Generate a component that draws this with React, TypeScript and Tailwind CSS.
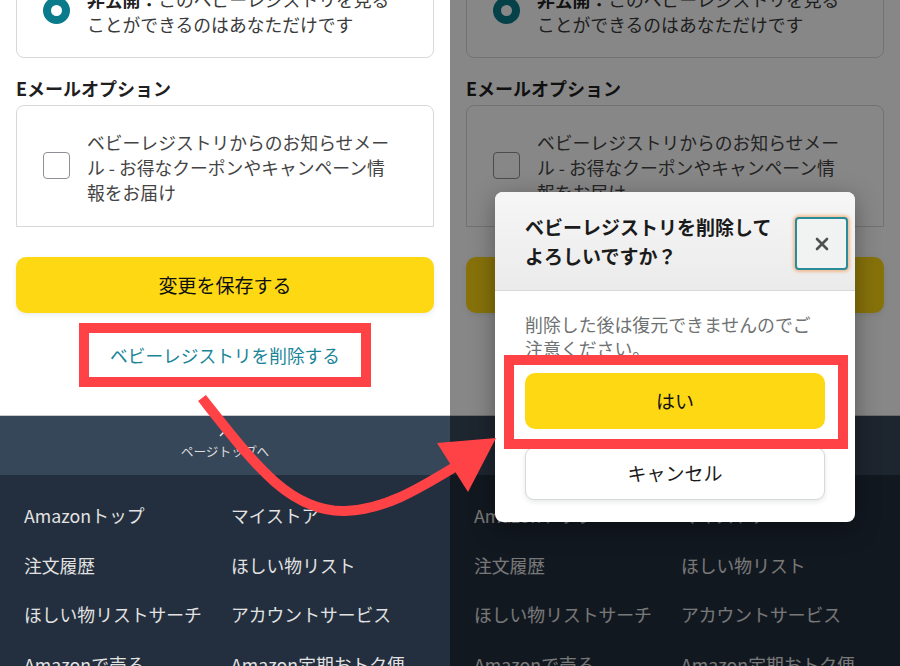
import React from 'react';

const FONT = { fontFamily: '"Noto Sans CJK JP", "Noto Sans", sans-serif' };

const footerLinks: [string, string][] = [
    ['Amazonトップ', 'マイストア'],
    ['注文履歴', 'ほしい物リスト'],
    ['ほしい物リストサーチ', 'アカウントサービス'],
    ['Amazonで売る', 'Amazon定期おトク便'],
];

// One phone screen of the registry settings page
const RegistryPage: React.FC<{ markDelete?: boolean }> = ({ markDelete }) => (
    <div className="bg-white">
        <div className="px-4">
            {/* privacy card, scrolled partly off the top */}
            <div className="-mt-[30px] flex rounded-lg border border-[#d5d9d9] pt-4 pb-5">
                <span className="mt-[10px] ml-[26px] h-[27px] w-[27px] shrink-0 rounded-full border-[8px] border-[#0a7b8b] bg-white" />
                <p className="ml-[17px] whitespace-nowrap text-[17.8px] leading-[25px] text-[#3a3a3a]">
                    <span className="font-bold text-[#222]">非公開：</span>このベビーレジストリを見る
                    <br />
                    ことができるのはあなただけです
                </p>
            </div>

            <h3 className="mt-[18px] text-[18px] font-bold leading-[25px] text-[#1f1f1f]">Eメールオプション</h3>

            <div className="mt-1 flex rounded-t-lg border border-[#d5d9d9] pt-6 pb-[21px]">
                <span className="mt-[22px] ml-[26px] h-[27px] w-[27px] shrink-0 rounded-[4px] border border-[#8d9096] bg-white" />
                <p className="ml-[17px] whitespace-nowrap text-[17.8px] leading-[25px] text-[#444]">
                    ベビーレジストリからのお知らせメー
                    <br />
                    ル - お得なクーポンやキャンペーン情
                    <br />
                    報をお届け
                </p>
            </div>

            <button className="mt-[30px] flex h-14 w-full items-center justify-center rounded-[10px] bg-[#ffd814] text-[19px] text-[#0f1111] shadow-[0_2px_5px_rgba(213,217,217,0.5)]">
                変更を保存する
            </button>

            <div
                className={`mx-auto mt-[10px] flex h-16 w-[292px] items-center justify-center border-[10px] ${
                    markDelete ? 'border-[#ff4245]' : 'border-transparent'
                }`}
            >
                <span className="text-[17.7px] text-[#1a8598]">ベビーレジストリを削除する</span>
            </div>
        </div>

        {/* back to top */}
        <div className="mt-[28px] flex h-[60px] flex-col items-center border-t border-[#c9cccc] bg-[#37475a] pt-[12px]">
            <svg width="12" height="8" viewBox="0 0 12 8" className="mt-[1px]">
                <polyline points="1,7 6,2 11,7" fill="none" stroke="#e6e6e6" strokeWidth="1.6" />
            </svg>
            <span className="mt-[5px] text-[12.7px] leading-[18px] text-[#dcdcdc]">ページトップへ</span>
        </div>

        <div className="bg-[#232f3e] px-6 pt-[28px] pb-10">
            <div className="grid grid-cols-[207px_1fr] gap-y-[24.5px]">
                {footerLinks.map(([a, b]) => (
                    <React.Fragment key={a}>
                        <span className="whitespace-nowrap text-[17.8px] leading-[25px] text-[#e2e2e2]">{a}</span>
                        <span className="whitespace-nowrap text-[17.8px] leading-[25px] text-[#e2e2e2]">{b}</span>
                    </React.Fragment>
                ))}
            </div>
        </div>
    </div>
);

const DeleteDialog: React.FC = () => (
    <div className="absolute top-[192px] left-[45px] w-[360px] overflow-hidden rounded-lg bg-white shadow-[0_6px_24px_rgba(0,0,0,0.35)]">
        <div className="flex items-start justify-between border-b border-[#d5d9d9] bg-gradient-to-b from-[#f6f6f6] to-[#ebebeb] pt-5 pb-5 pl-[30px]">
            <h2 className="whitespace-nowrap text-[19px] font-bold leading-[29px] text-[#1b1b1b]">
                ベビーレジストリを削除して
                <br />
                よろしいですか？
            </h2>
            <button className="mt-[5px] mr-[7px] flex h-[53px] w-[53px] items-center justify-center rounded-[4px] border-2 border-[#2a8b99] bg-[#f1f2f2] shadow-[0_0_3px_2px_rgba(240,150,80,0.55)]">
                <svg width="14" height="14" viewBox="0 0 14 14">
                    <path d="M2 2 L12 12 M12 2 L2 12" stroke="#505050" strokeWidth="2.6" strokeLinecap="round" />
                </svg>
            </button>
        </div>

        <div className="px-[30px] pt-[21px] pb-[22px]">
            <p className="whitespace-nowrap text-[17.9px] leading-[24px] text-[#6f7272]">
                削除した後は復元できませんのでご
                <br />
                注意ください。
            </p>
            <div className="relative z-10 -mt-[5px] -ml-[21px] -mr-[23px] border-[10px] border-[#ff4245] pt-2 pr-[13px] pb-[10px] pl-[11px]">
                <button className="flex h-14 w-full items-center justify-center rounded-[10px] bg-[#ffd814] text-[19px] text-[#0f1111]">
                    はい
                </button>
            </div>
            <button className="-mt-[2px] flex h-[53px] w-full items-center justify-center rounded-[9px] border border-[#d5d9d9] bg-white text-[19px] text-[#1b1b1b] shadow-[0_2px_5px_rgba(213,217,217,0.6)]">
                キャンセル
            </button>
        </div>
    </div>
);

export default function App() {
    return (
        <div className="relative flex h-[666px] w-[900px] overflow-hidden bg-white" style={FONT}>
            <div className="relative h-full w-[450px] overflow-hidden">
                <RegistryPage markDelete />
            </div>

            <div className="relative h-full w-[450px] overflow-hidden">
                <RegistryPage />
                <div className="absolute inset-0 bg-black/[0.47]" />
                <DeleteDialog />
            </div>

            {/* annotation arrow */}
            <svg className="pointer-events-none absolute inset-0" width="900" height="666" viewBox="0 0 900 666">
                <path
                    d="M202 398 C255 465 290 512 345 511 C385 510 420 488 458 465"
                    fill="none"
                    stroke="#ff4245"
                    strokeWidth="10"
                />
                <polygon points="437,443 496,438 468,492" fill="#ff4245" />
            </svg>
        </div>
    );
}
